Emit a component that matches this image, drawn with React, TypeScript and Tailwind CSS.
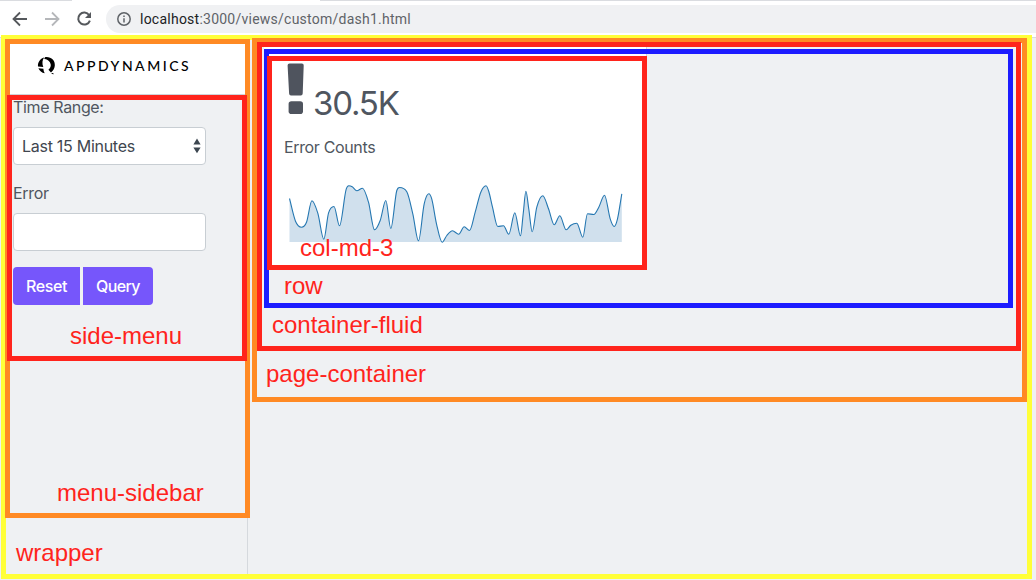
import React from "react";

type Point = [number, number];

const errorCounts: Point[] = [
  [0, 14], [6, 36.7], [12, 42.7], [17, 37.7], [22.4, 16.3], [28.3, 28.7], [34.3, 54.7], [39, 28.7], [44.5, 22], [50, 41.3],
  [56.7, 4.7], [59.3, 1.3], [62.7, 2.3], [67.3, 6.3], [73, 3.7], [79, 17.7], [85, 45.3], [90.7, 36], [96.3, 16], [101.3, 44],
  [107.3, 6], [110, 3], [117.3, 7.3], [123.3, 29.3], [129, 56.3], [134.7, 19.3], [139.3, 9.3], [142.3, 14.7], [147, 39.3],
  [152.7, 57.7], [157.3, 51], [163, 46.3], [169.2, 49.7], [174.7, 42.3], [180, 46], [185.7, 27.7],
  [191.3, 7.7], [196.5, 1.3], [199.3, 7], [203, 22.7], [208.3, 42], [214, 41.3], [219.3, 49.7], [225.3, 28.3], [231, 51.3],
  [233.7, 29.3], [236.4, 6.7], [239.3, 24.7], [242.7, 47.3], [247.3, 22.7], [253.3, 11.3], [259, 24.3], [264.7, 40.3], [270.3, 31.3],
  [276.7, 45.3], [281.3, 40.7], [287.3, 38.7], [293.3, 52.7], [298, 29.3], [304.3, 30], [309.3, 22.7], [315, 10.7],
  [320.7, 34.3], [324.7, 42], [328, 34.3], [332.3, 9.3],
];

function monotonePath(points: Point[]): string {
  const slopes = points.slice(1).map((p, i) => (p[1] - points[i][1]) / (p[0] - points[i][0]));
  const tangents = points.map((_, i) => {
    if (i === 0) return slopes[0];
    if (i === points.length - 1) return slopes[i - 1];
    const a = slopes[i - 1];
    const b = slopes[i];
    if (a * b <= 0) return 0;
    const limit = 3 * Math.min(Math.abs(a), Math.abs(b));
    return Math.sign(a) * Math.min(limit, Math.abs(a + b) / 2);
  });
  let d = `M${points[0][0]},${points[0][1]}`;
  for (let i = 1; i < points.length; i++) {
    const [x0, y0] = points[i - 1];
    const [x1, y1] = points[i];
    const h = (x1 - x0) / 3;
    d += `C${x0 + h},${y0 + h * tangents[i - 1]} ${x1 - h},${y1 - h * tangents[i]} ${x1},${y1}`;
  }
  return d;
}

function Sparkline() {
  const line = monotonePath(errorCounts);
  return (
    <svg width="334" height="59" className="ml-[17px] mt-[25px] block shrink-0">
      <g transform="translate(0.5 0.5)">
        <path d={`${line}L332.3,57.5L0,57.5Z`} fill="#d0e0ed" />
        <path d={line} fill="none" stroke="#2577b1" strokeWidth="1.1" />
      </g>
    </svg>
  );
}

function Label({ className, children }: { className: string; children: React.ReactNode }) {
  return (
    <span className={`whitespace-nowrap font-['Liberation_Sans'] text-[24px] leading-7 text-[#ff241c] ${className}`}>
      {children}
    </span>
  );
}

function BrowserBar() {
  return (
    <header className="flex h-[38px] shrink-0 flex-col border-b border-[#d8dadd] bg-white">
      <div className="flex h-px shrink-0 justify-between">
        <div className="w-[72px] bg-[#dadce0]" />
        <div className="w-[716px] bg-[#dadce0]" />
      </div>
      <div className="mt-1 flex h-7 items-center">
        <svg width="106" height="28" viewBox="0 0 106 28" fill="none" strokeWidth="1.8">
          <path d="M27 14H14M20 7.5L13.5 14L20 20.5" stroke="#55585c" />
          <path d="M45 14H58M52 7.5L58.5 14L52 20.5" stroke="#b5b7ba" />
          <path d="M89.2 10.2A6 6 0 1 0 89.9 15.6" stroke="#55585c" strokeWidth="2" />
          <path d="M91 7v6h-6z" fill="#55585c" />
        </svg>
        <div className="flex h-7 flex-1 items-center rounded-l-full bg-[#f0f1f3] pl-[11px]">
          <svg width="14" height="14" viewBox="0 0 14 14" fill="none" stroke="#5f6368" strokeWidth="1.5">
            <circle cx="7" cy="7" r="6.2" />
            <path d="M7 6.2V10.5M7 3.5V5" />
          </svg>
          <span className="ml-[9px] font-[Roboto] text-[14px] tracking-[0.24px] text-[#5f6368]">
            <span className="text-[#202124]">localhost</span>:3000/views/custom/dash1.html
          </span>
        </div>
      </div>
    </header>
  );
}

function Logo() {
  return (
    <div className="flex h-[51px] shrink-0 border-b border-[#cfd3d8] bg-white">
      <svg width="19" height="20" viewBox="0 0 19 20" className="ml-[27px] mt-3">
        <path d="M7.2 1.6C3 2.7.6 6.6 1 10.6L6.3 11.1C4.9 7.6 5.2 4 7.2 1.6Z" />
        <path d="M1.4 12.2C2.5 14.9 4.8 16.8 7.8 17.2C6.9 15.9 6.6 14.5 6.4 12.7Z" />
        <path d="M8 1.2C14 .4 18.4 4.6 17.8 9.8C17.5 12.6 16.2 14.8 14 16.4L11.4 13.8C14.2 11.6 14.4 8.8 12.9 6.3C11.7 4.4 9.8 3.3 7.2 3.1Z" />
        <path d="M14 17h2.4v1.4Z" />
      </svg>
      <span className="ml-[8px] mt-[13px] font-[Lato] text-[14px] font-medium leading-[18px] tracking-[2.5px] text-black">
        APPDYNAMICS
      </span>
    </div>
  );
}

function SideMenu() {
  return (
    <section className="-ml-[3px] flex h-[266px] w-[240px] shrink-0 flex-col border-[5px] border-[#ff241c] pl-px text-[16px] text-[#4f5660]">
      <label className="-mt-[5px] h-6 leading-6 tracking-[-0.35px]">Time Range:</label>
      <button className="mt-2 flex h-[38px] w-[193px] shrink-0 items-center justify-between rounded border border-[#c8ced3] bg-white pl-2 pr-1">
        <span className="tracking-[-0.28px] text-[#40464f]">Last 15 Minutes</span>
        <svg width="8" height="16" viewBox="0 0 8 16" fill="#3c4650">
          <path d="M4 .6L7.6 6.4H.4zM.4 9.4H7.6L4 15.2z" />
        </svg>
      </button>
      <label className="mt-4 h-6 leading-6 tracking-[-0.3px]">Error</label>
      <input aria-label="Error" className="mt-2 h-[38px] w-[193px] shrink-0 rounded border border-[#c8ced3] bg-white" />
      <div className="mt-4 flex shrink-0 gap-[3px] font-medium text-white">
        <button className="h-[38px] w-[67px] rounded-l bg-[#7656fb] tracking-[-0.4px]">Reset</button>
        <button className="h-[38px] w-[70px] rounded-r bg-[#7656fb] tracking-[-0.6px]">Query</button>
      </div>
      <Label className="ml-[57px] mt-[17px]">side-menu</Label>
    </section>
  );
}

function MenuSidebar() {
  return (
    <div className="-ml-px -mt-px flex w-[245px] shrink-0 flex-col">
      <aside className="flex h-[479px] shrink-0 flex-col border-[5px] border-[#ff8a24]">
        <Logo />
        <SideMenu />
        <Label className="ml-[47px] mt-[118px]">menu-sidebar</Label>
      </aside>
      <div className="mr-[2px] flex-1 border-r border-[#d5d9dd] pl-[11px] pt-[21px]">
        <Label className="">wrapper</Label>
      </div>
    </div>
  );
}

function ErrorCard() {
  return (
    <article className="-ml-[2px] flex h-[214px] w-[380px] shrink-0 flex-col border-[5px] border-[#ff241c] bg-white text-[#4f5660]">
      <div className="flex h-[62px] shrink-0">
        <svg width="18" height="52" viewBox="0 0 18 52" fill="#4f545e" className="ml-[15px] mt-[2px]">
          <path d="M2.5.5H14.9Q16.8.5 16.7 2.4L15.7 30.5Q15.6 32.5 13.8 32.5H4Q2.2 32.5 2.1 30.5L.6 2.4Q.5.5 2.5.5Z" />
          <rect x="1.6" y="38.3" width="14.4" height="12.7" rx="2.8" />
        </svg>
        <span className="ml-[8px] mt-[21px] text-[33px] leading-[42px] tracking-[-1.2px]">30.5K</span>
      </div>
      <p className="ml-3 mt-3 h-6 shrink-0 text-[16px] leading-6 tracking-[-0.35px]">Error Counts</p>
      <Sparkline />
      <Label className="-mt-[9px] ml-[28px]">col-md-3</Label>
    </article>
  );
}

function PageContainer() {
  return (
    <main className="-mt-[2px] ml-[2px] flex h-[364px] w-[775px] shrink-0 flex-col border-[5px] border-[#ff8a24]">
      <div className="-mt-px flex h-[309px] w-[764px] shrink-0 flex-col border-[5px] border-[#ff241c]">
        <div className="ml-[2px] h-[2px] w-[383px] shrink-0 border-r border-[#d3d6da] bg-white" />
        <div className="ml-[2px] flex h-[259px] w-[749px] shrink-0 flex-col border-[5px] border-[#1c1cff]">
          <div className="h-[2px] w-[378px] shrink-0 border-r border-[#d3d6da] bg-white" />
          <ErrorCard />
          <Label className="ml-[15px] mt-[2px]">row</Label>
        </div>
        <Label className="ml-[10px] mt-[3px]">container-fluid</Label>
      </div>
      <Label className="ml-[9px] mt-[9px]">page-container</Label>
    </main>
  );
}

export default function App() {
  return (
    <div className="flex h-[580px] w-[1036px] flex-col overflow-hidden bg-[#eff1f3] font-[Inter,sans-serif]">
      <BrowserBar />
      <div className="relative -mt-[3px] ml-px flex h-[544px] w-[1031px] shrink-0 border-[5px] border-[#ffff38]">
        <MenuSidebar />
        <PageContainer />
      </div>
    </div>
  );
}
